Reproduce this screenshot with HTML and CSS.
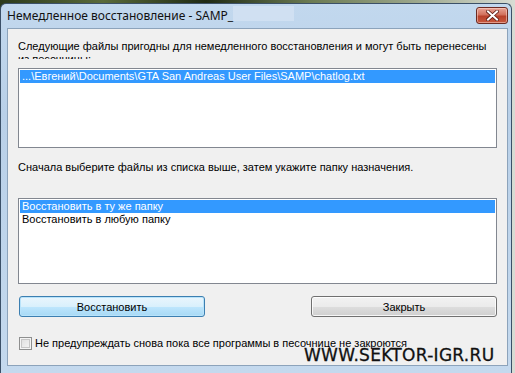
FILE: index.html
```html
<!DOCTYPE html>
<html lang="ru">
<head>
    <meta charset="UTF-8">
    <title>Немедленное восстановление</title>
    <link rel="stylesheet" href="styles.css">
</head>
<body>
    <div class="window">
        <div class="titlebar">
            <span class="title">Немедленное восстановление - SAMP_</span>
            <span class="title-blur"></span>
            <span class="close">
                <svg width="13" height="11" viewBox="0 0 13 11">
                    <path d="M2 1.5 L11 9.5 M11 1.5 L2 9.5" stroke="#5a1a12" stroke-width="3.6" stroke-linecap="square"/>
                    <path d="M2 1.5 L11 9.5 M11 1.5 L2 9.5" stroke="#fff" stroke-width="2" stroke-linecap="square"/>
                </svg>
            </span>
        </div>
        <div class="client">
            <p class="intro">Следующие файлы пригодны для немедленного восстановления и могут быть перенесены из песочницы:</p>
            <div class="listbox files">
                <div class="item selected">...\Евгений\Documents\GTA San Andreas User Files\SAMP\chatlog.txt</div>
            </div>
            <p class="hint">Сначала выберите файлы из списка выше, затем укажите папку назначения.</p>
            <div class="listbox targets">
                <div class="item selected">Восстановить в ту же папку</div>
                <div class="item">Восстановить в любую папку</div>
            </div>
            <div class="buttons">
                <button class="btn btn-default">Восстановить</button>
                <button class="btn">Закрыть</button>
            </div>
            <label class="check">
                <span class="box"></span>
                Не предупреждать снова пока все программы в песочнице не закроются
            </label>
            <div class="watermark">WWW.SEKTOR-IGR.RU</div>
        </div>
    </div>
</body>
</html>
```
FILE: styles.css
```css
html, body {
    margin: 0;
    padding: 0;
}
body {
    width: 515px;
    height: 373px;
    overflow: hidden;
    background: linear-gradient(90deg, #2c3a1c, #5a6a3a 20%, #1f2a14 40%, #6b7a52 60%, #9aa58a 80%, #d8dcd4);
    font-family: "Liberation Sans", Arial, sans-serif;
    font-size: 11px;
    color: #000;
}
.window {
    margin-top: 3px;
    width: 512px;
    height: 370px;
    border: 1px solid #3b5068;
    border-bottom: none;
    border-radius: 6px 6px 0 0;
    background: linear-gradient(180deg, #c2d8ee 0%, #b9d0e8 30%, #c4d9ee 100%);
    padding: 0 3px 0 6px;
    box-sizing: border-box;
    display: flex;
    flex-direction: column;
}
.titlebar {
    height: 24px;
    display: flex;
    align-items: center;
    position: relative;
}
.title {
    font-family: "Noto Sans", "Open Sans", sans-serif;
    font-size: 12px;
    color: #111;
    margin-top: -2px;
}
.title-blur {
    width: 61px;
    height: 15px;
    margin-top: -6px;
    background: rgba(214, 228, 244, 0.7);
}
.close {
    position: absolute;
    right: 0;
    top: 3px;
    width: 32px;
    height: 17px;
    box-sizing: border-box;
    border: 1px solid #6b2a22;
    border-radius: 3px;
    background: linear-gradient(180deg, #e8a496 0%, #d2705c 45%, #b8402a 55%, #c75a40 100%);
    box-shadow: inset 0 0 0 1px rgba(255, 220, 210, 0.5);
    display: flex;
    align-items: center;
    justify-content: center;
}
.client {
    position: relative;
    flex: 1;
    margin-bottom: 7px;
    background: #f0f0f0;
    border: 1px solid #8ca3bb;
    padding: 0 10px;
    display: flex;
    flex-direction: column;
}
.intro {
    margin: 11px 0 0 0;
    height: 19px;
    line-height: 13px;
    overflow: hidden;
}
.listbox {
    background: #fff;
    border: 1px solid #828790;
    padding: 1px;
    box-sizing: border-box;
}
.files {
    margin-top: 9px;
    height: 80px;
}
.targets {
    margin-top: 24px;
    height: 86px;
}
.item {
    height: 13px;
    line-height: 13px;
    padding-left: 2px;
    white-space: nowrap;
}
.item.selected {
    background: #3399ff;
    color: #fff;
}
.hint {
    margin: 13px 0 0 0;
    line-height: 13px;
}
.buttons {
    margin-top: 12px;
    display: flex;
    justify-content: space-between;
    padding-left: 1px;
}
.btn {
    width: 186px;
    height: 21px;
    font-family: "Liberation Sans", Arial, sans-serif;
    font-size: 11px;
    color: #000;
    border: 1px solid #707070;
    border-radius: 3px;
    background: linear-gradient(180deg, #f2f2f2 0%, #ebebeb 50%, #dddddd 51%, #cfcfcf 100%);
    box-shadow: inset 0 0 0 1px rgba(255, 255, 255, 0.8);
    padding: 0;
}
.btn-default {
    border-color: #3c7fb1;
    background: linear-gradient(180deg, #eaf6fd 0%, #d9f0fc 50%, #bee6fd 51%, #a7d9f5 100%);
    box-shadow: inset 0 0 0 1px #b9e3fa;
}
.check {
    margin-top: 20px;
    display: flex;
    align-items: center;
    gap: 3px;
    padding-left: 1px;
    line-height: 13px;
}
.box {
    width: 13px;
    height: 13px;
    box-sizing: border-box;
    border: 1px solid #8e8f8f;
    background: linear-gradient(135deg, #dcdcdc, #f6f6f6);
    box-shadow: inset 0 0 0 1px #f4f4f4, inset 0 0 0 2px #c6c6c6;
}
.watermark {
    position: absolute;
    left: 296px;
    top: 316px;
    font-family: "DejaVu Sans", Verdana, sans-serif;
    font-size: 17px;
    letter-spacing: 0.3px;
    color: #111;
    -webkit-text-stroke: 0.3px #111;
}
```
